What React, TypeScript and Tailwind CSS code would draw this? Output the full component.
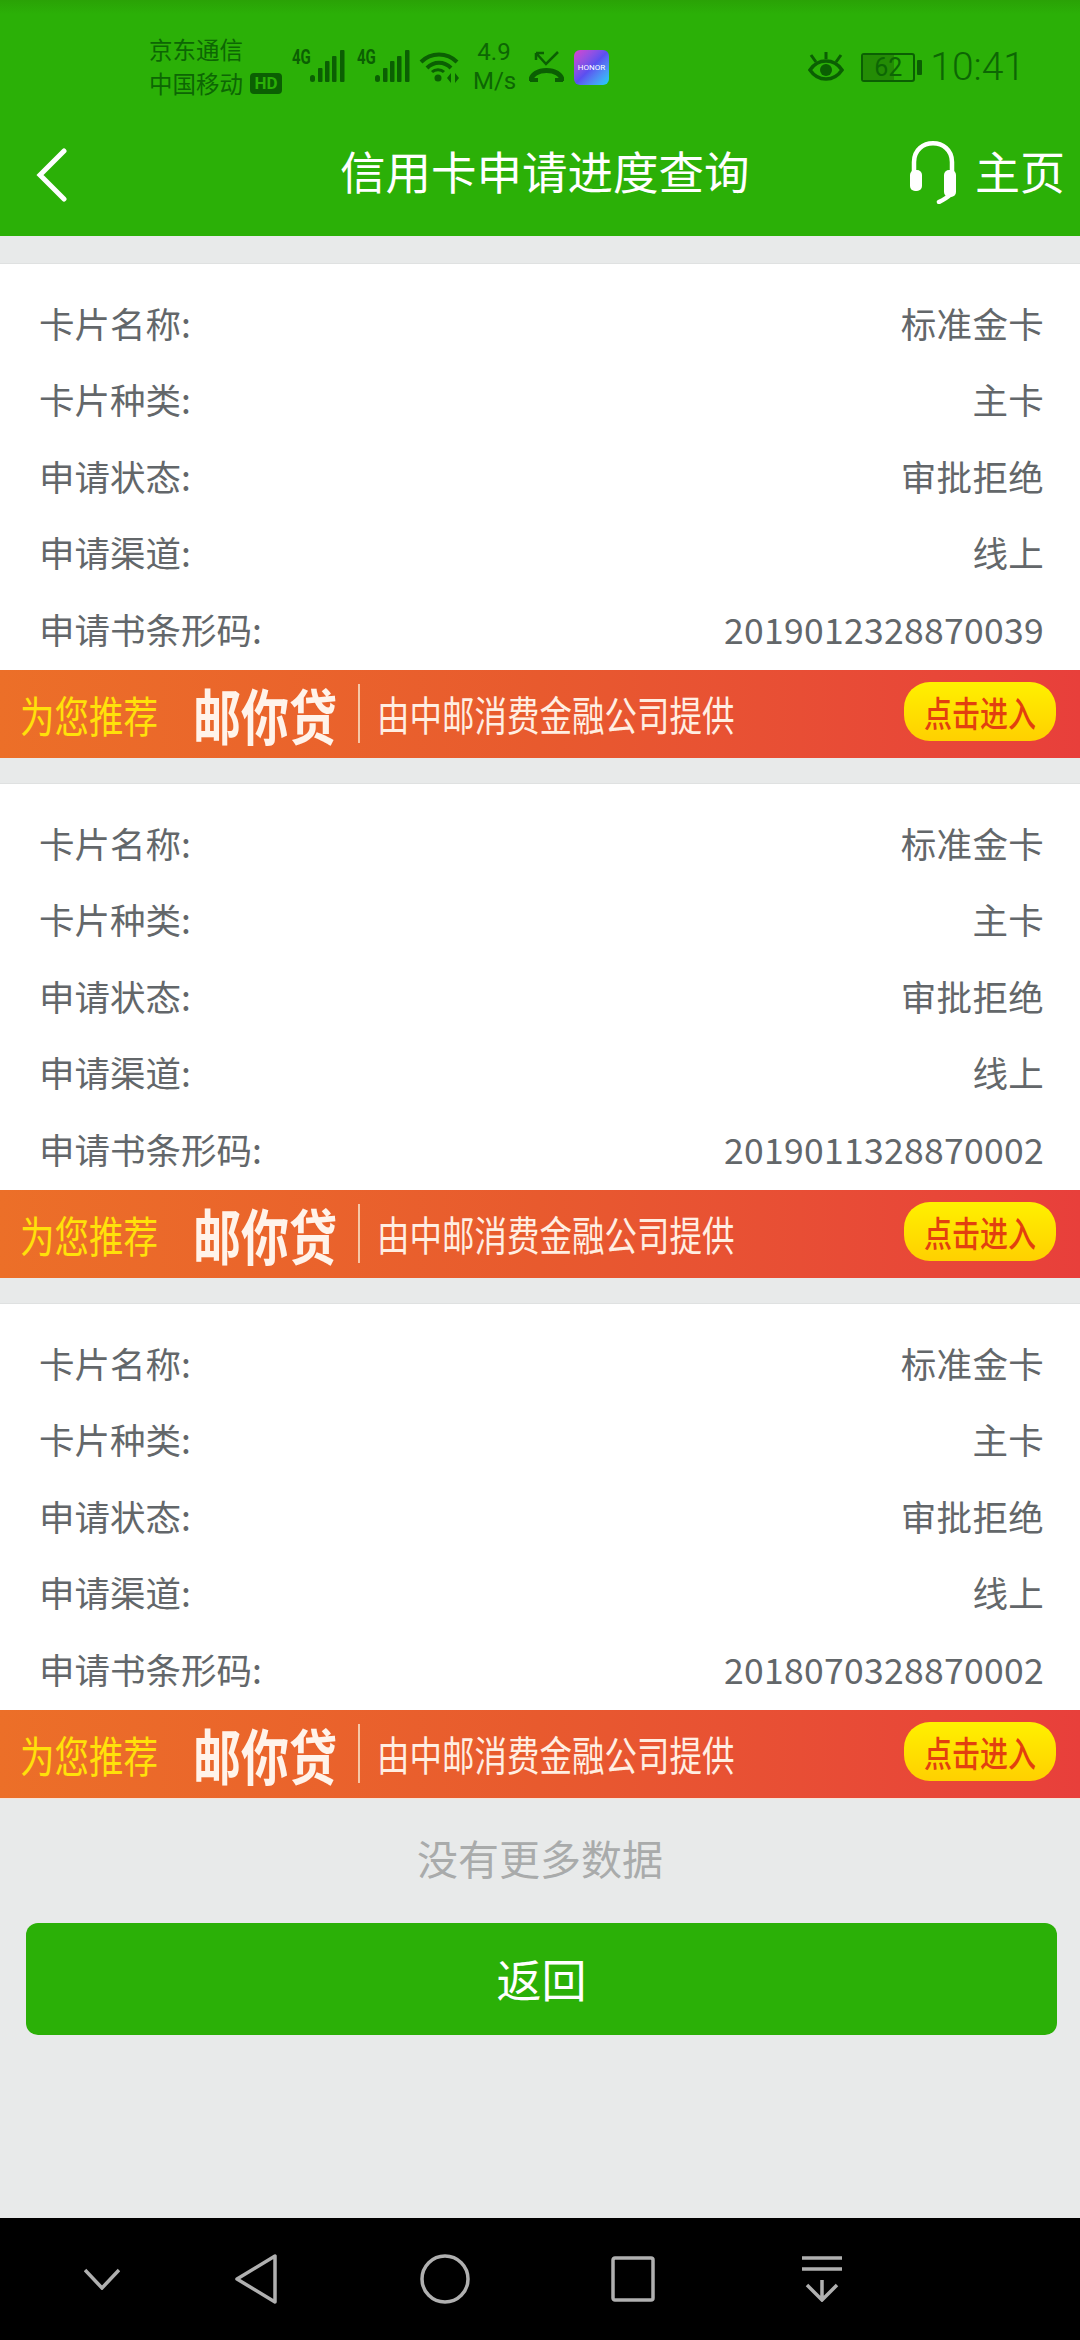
const font = { fontFamily: '"Noto Sans CJK SC", Roboto, sans-serif' };

const rows = (code: string) => [
  ["卡片名称:", "标准金卡"],
  ["卡片种类:", "主卡"],
  ["申请状态:", "审批拒绝"],
  ["申请渠道:", "线上"],
  ["申请书条形码:", code],
];

const Signal = () => (
  <div className="flex items-start w-[53px] h-[34px]">
    <span className="font-['Roboto'] font-bold text-[20px] leading-[15px] scale-x-75 origin-left w-[18px] text-[#0b5f03]">4G</span>
    <svg width="35" height="33" viewBox="0 0 35 33" fill="#0b5f03">
      <rect x="0" y="25" width="5" height="7" rx="2.5" />
      <rect x="8" y="18" width="4.5" height="14" rx="1" />
      <rect x="15" y="11" width="4.5" height="21" rx="1" />
      <rect x="22" y="6" width="4.5" height="26" rx="1" />
      <rect x="30" y="0" width="4.5" height="32" rx="1" />
    </svg>
  </div>
);

const StatusBar = () => (
  <div className="flex items-center h-[118px] pl-[149px] pr-[55px] pt-[16px] text-[#0d6604] bg-gradient-to-b from-[#2aa206] to-[#2bb007] to-[12%]">
    <div className="w-[95px] -mt-[3px] text-[23.5px] leading-[34px] whitespace-nowrap">
      <div>京东通信</div>
      <div>中国移动</div>
    </div>
    <span className="mt-[33px] ml-[6px] w-[32px] h-[21px] rounded-[4px] bg-[#0b5f03] text-[#2bb007] text-[17px] leading-[21px] font-bold text-center font-['Roboto']">HD</span>
    <div className="ml-[10px] flex gap-[12px] -mt-[1px]">
      <Signal />
      <Signal />
    </div>
    <svg className="ml-[9px]" width="40" height="32" viewBox="0 0 40 32" fill="none" stroke="#0b5f03" strokeWidth="4">
      <path d="M2 11 C12 1 28 1 38 11" />
      <path d="M8 17 C15 10 25 10 32 17" />
      <circle cx="19" cy="27" r="3.5" fill="#0b5f03" stroke="none" />
      <path d="M13 21 C16 18 22 18 25 21" strokeWidth="3" />
      <path d="M28 27 l4 -5 v10 z M40 27 l-4 -5 v10 z" fill="#0b5f03" stroke="none" />
    </svg>
    <div className="ml-[14px] w-[42px] text-center font-['Roboto'] text-[24px] leading-[29px] whitespace-nowrap">
      <div>4.9</div>
      <div>M/s</div>
    </div>
    <svg className="ml-[14px]" width="35" height="32" viewBox="0 0 35 32" fill="none" stroke="#0b5f03" strokeWidth="2.5">
      <path d="M7 2 L17 13 L29 1 M7 2 V9 M7 2 H15" />
      <path d="M2 30 C2 16 33 16 33 30" strokeWidth="5" />
      <path d="M1 27 h8 v4 h-8 z M26 27 h8 v4 h-8 z" fill="#0b5f03" stroke="none" />
    </svg>
    <div className="ml-[10px] w-[35px] h-[35px] rounded-[6px] bg-gradient-to-br from-[#d83fd0] via-[#5a4ff0] to-[#08d0f5] text-white text-[8px] leading-[35px] text-center font-['Roboto']">HONOR</div>
    <svg className="ml-auto" width="36" height="31" viewBox="0 0 36 31" fill="none" stroke="#0b5f03" strokeWidth="3.5">
      <path d="M2 18 C10 6 26 6 34 18 C26 30 10 30 2 18 Z" />
      <circle cx="18" cy="18" r="6" fill="#0b5f03" stroke="none" />
      <path d="M18 0 V7 M3 3 L8 10 M33 3 L28 10" strokeWidth="3" />
    </svg>
    <div className="ml-[17px] relative w-[54px] h-[29px] rounded-[3px] border-2 border-[#0b5f03] text-[25px] leading-[25px] text-center font-['Roboto'] overflow-hidden">
      <div className="absolute inset-y-0 left-0 w-[62%] bg-[#248c05]" />
      <span className="relative">62</span>
    </div>
    <div className="ml-[2px] w-[5px] h-[15px] rounded-[1px] bg-[#0b5f03]" />
    <div className="ml-[8px] text-[39px] leading-none font-['Roboto'] font-light">10:41</div>
  </div>
);

const NavBar = () => (
  <div className="flex items-center h-[118px] text-white pb-[13px]">
    <svg className="ml-[36px] mt-[8px]" width="32" height="54" viewBox="0 0 32 54" fill="none" stroke="white" strokeWidth="5" strokeLinecap="round">
      <path d="M28 3 L4 27 L28 51" />
    </svg>
    <div className="ml-[272px] w-[410px] text-[45.5px] leading-none whitespace-nowrap">信用卡申请进度查询</div>
    <svg className="ml-auto mt-[3px]" width="48" height="64" viewBox="0 0 48 64" fill="none">
      <path d="M5 34 V22 C5 -3 43 -3 43 22 V34" stroke="white" strokeWidth="4.5" />
      <rect x="1" y="30" width="12" height="21" rx="5" fill="white" />
      <rect x="35" y="30" width="12" height="27" rx="5" fill="white" />
      <path d="M42 54 C38 58 34 60 30 62" stroke="white" strokeWidth="4.5" strokeLinecap="round" />
    </svg>
    <div className="ml-[18px] mr-[15px] text-[45px] leading-none whitespace-nowrap">主页</div>
  </div>
);

const Banner = () => (
  <div className="flex items-center h-[88px] whitespace-nowrap bg-gradient-to-r from-[#ec6f28] via-[#e85a2e] to-[#e83f3b]">
    <span className="ml-[20px] w-[138px] text-[34.5px] leading-none scale-y-125 text-[#ffe10a]">为您推荐</span>
    <span className="ml-[35px] w-[146px] text-[48px] leading-none font-bold scale-y-125 text-[#fff3ea]">邮你贷</span>
    <div className="ml-[19px] w-[2px] h-[59px] bg-[#f6c7a8]" />
    <span className="ml-[17px] w-[358px] text-[32.5px] leading-none scale-y-125 text-[#ffeee2]">由中邮消费金融公司提供</span>
    <div className="ml-auto mr-[24px] -mt-[4px] flex items-center justify-center w-[152px] h-[59px] rounded-[26px] bg-gradient-to-b from-[#fff000] to-[#ffd000] text-[#e2400f] text-[28px] leading-none font-medium">
      <span className="scale-y-125">点击进入</span>
    </div>
  </div>
);

const Card = ({ code }: { code: string }) => (
  <div className="mt-[25px] bg-white border-t border-[#dfe1e1] pt-[20px]">
    <div className="pb-[3px]">
      {rows(code).map(([label, value]) => (
        <div key={label} className="flex items-center justify-between h-[76.6px] pl-[39px] pr-[36px] text-[35.5px] text-[#63676a]">
          <span>{label}</span>
          <span className="tracking-[0.3px]">{value}</span>
        </div>
      ))}
    </div>
    <Banner />
  </div>
);

const BottomNav = () => (
  <div className="flex items-center h-[122px] bg-black">
    <svg className="ml-[84px]" width="36" height="22" viewBox="0 0 36 22" fill="none" stroke="#b0b0b0" strokeWidth="3.5">
      <path d="M1 2 L18 20 L35 2" />
    </svg>
    <svg className="ml-[115px]" width="44" height="50" viewBox="0 0 44 50" fill="none" stroke="#b0b0b0" strokeWidth="3.5" strokeLinejoin="round">
      <path d="M40 2 V48 L2 25 Z" />
    </svg>
    <svg className="ml-[141px]" width="50" height="50" viewBox="0 0 50 50" fill="none" stroke="#b0b0b0" strokeWidth="3.5">
      <circle cx="25" cy="25" r="23" />
    </svg>
    <svg className="ml-[141px]" width="44" height="46" viewBox="0 0 44 46" fill="none" stroke="#b0b0b0" strokeWidth="3.5">
      <rect x="2" y="2" width="40" height="42" rx="2" />
    </svg>
    <svg className="ml-[147px]" width="40" height="46" viewBox="0 0 40 46" fill="none" stroke="#b0b0b0" strokeWidth="3.5">
      <path d="M0 2 H40 M0 13 H40 M20 24 V44 M5 29 L20 44 L35 29" />
    </svg>
  </div>
);

export default function App() {
  return (
    <div className="flex flex-col w-[1080px] h-[2340px] overflow-hidden bg-[#e8eaea]" style={font}>
      <div className="bg-[#2bb007]">
        <StatusBar />
        <NavBar />
      </div>
      <div className="mt-[2px]">
        <Card code="2019012328870039" />
        <Card code="2019011328870002" />
        <Card code="2018070328870002" />
      </div>
      <div className="flex-1 border-t border-[#f6e3d8]">
        <div className="mt-[34px] text-center text-[41px] leading-[48px] text-[#a9abab]">没有更多数据</div>
        <button className="block mt-[42px] mx-[26px] w-[1031px] h-[112px] rounded-[12px] bg-[#2bb007] text-white text-[45px]">返回</button>
      </div>
      <BottomNav />
    </div>
  );
}
